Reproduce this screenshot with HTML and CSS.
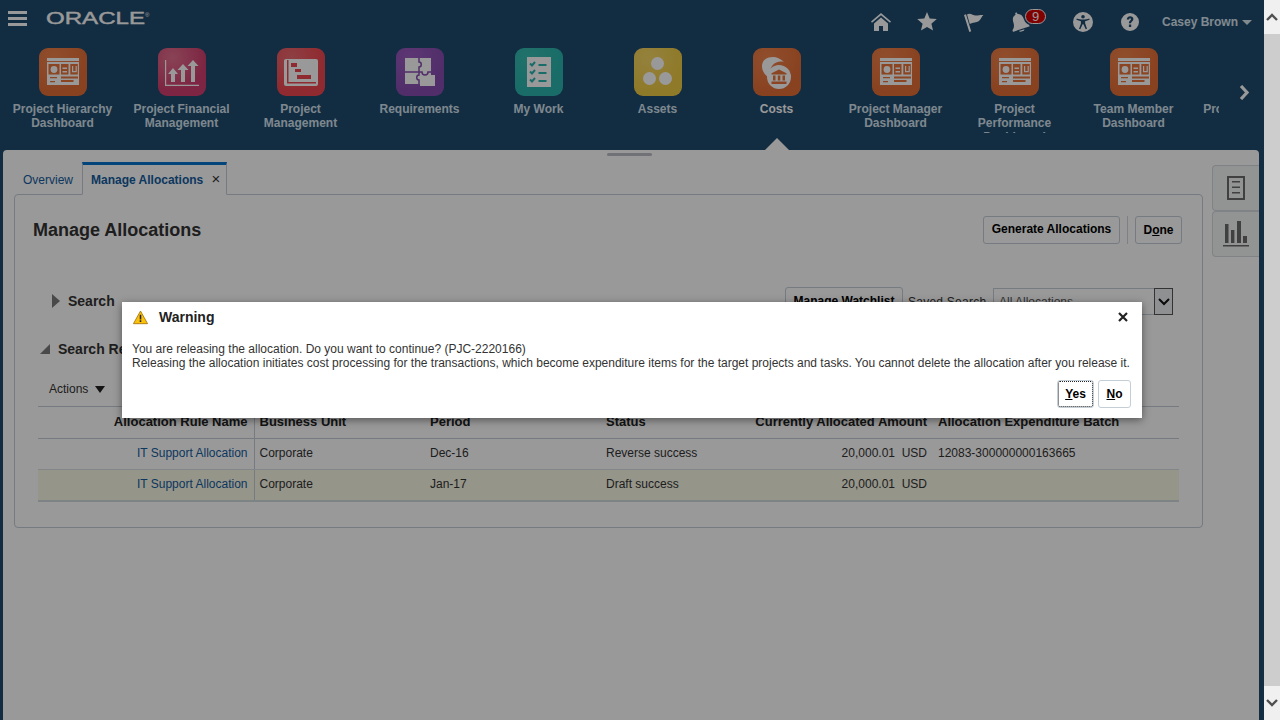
FILE: index.html
```html
<!DOCTYPE html>
<html lang="en">
<head>
  <meta charset="UTF-8" />
  <title>Manage Allocations</title>
  <link rel="stylesheet" href="styles.css">
</head>
<body>
  <svg class="defs" width="0" height="0">
    <symbol id="dash" viewBox="0 0 48 48">
      <rect x="8" y="10" width="32" height="3" fill="#fff"/>
      <rect x="8" y="14" width="32" height="23" fill="#fff"/>
      <rect x="9.5" y="16" width="11" height="10.5" fill="#e8743b"/>
      <rect x="22" y="16" width="7.5" height="10.5" fill="#e8743b"/>
      <rect x="31.3" y="16" width="7.5" height="10.5" fill="#e8743b"/>
      <circle cx="15" cy="21.5" r="3.4" fill="#fff"/>
      <path d="M23.5 19.5h4.5v1.4h-4.5zM23.5 23h4.5v1.4h-4.5zM33 18h1.2v5h2.4v-5h1.2v6.2H33z" fill="#fff"/>
      <path d="M11 29h7v1.3h-7zM11 33h5v1.3h-5zM22 28.5h17v2h-17zM22 32h12.5v2H22z" fill="#e8743b"/>
    </symbol>
  </svg>

  <div class="page">
    <header class="shell-head">
      <div class="topbar">
        <div class="hamburger"><span></span><span></span><span></span></div>
        <svg class="logo" width="104" height="16" viewBox="0 0 104 16">
          <text x="0" y="13" textLength="99" lengthAdjust="spacingAndGlyphs">ORACLE</text>
          <text x="99" y="6" class="reg">®</text>
        </svg>
        <div class="top-tools">
          <svg class="tool t-home" width="20" height="18" viewBox="0 0 20 18"><path d="M10 0 0 8.500l1 1.300L10 2.300l9 7.500 1-1.300zM3 10.500 10 4.600l7 5.900V18h-5v-5H8v5H3z"/></svg>
          <svg class="tool t-star" width="20" height="19" viewBox="0 0 20 19"><path d="m10 0 2.700 6.500 7.100.6-5.400 4.600 1.700 6.900L10 15l-6.100 3.600 1.700-6.900L.2 7.100l7.100-.6z"/></svg>
          <svg class="tool t-flag" width="20" height="19" viewBox="0 0 20 19"><path d="M0 2 2 1.300l5.200 17-1.900.7zM3 1.500C6.500-.5 9 2.800 12 2.600c2.700-.2 5-1 7.500-.6-2 1.700-2.500 4-4.500 6-2.500 2-6 1.200-9.200 3z"/></svg>
          <div class="t-bell">
            <svg class="tool bell-glyph" width="18" height="20" viewBox="0 0 18 20"><path d="M8 0h2v2c3.500.7 4.500 3.500 4.500 7 0 3 1 5 3.500 7v1.500H0V16c2.500-2 3.500-4 3.500-7 0-3.500 1-6.300 4.500-7zM6 18.500h6c-.5 1-1.500 1.500-3 1.500s-2.500-.5-3-1.500z"/></svg>
            <span class="badge">9</span>
          </div>
          <svg class="tool t-access" width="20" height="20" viewBox="0 0 20 20"><path fill-rule="evenodd" d="M10 0a10 10 0 1 1 0 20 10 10 0 0 1 0-20zm0 3a1.800 1.800 0 1 0 0 3.600A1.800 1.800 0 0 0 10 3zM3.800 6.500l-.4 1.300 4.500 1.500v2.500L6 16.700l1.300.5 2.300-5h.8l2.300 5 1.300-.5-1.900-5.400V9.300l4.500-1.500-.4-1.300c-2 .6-3.800 1.100-6.200 1.100S5.800 7.100 3.800 6.500z"/></svg>
          <svg class="tool t-help" width="18" height="18" viewBox="0 0 18 18"><path fill-rule="evenodd" d="M9 0a9 9 0 1 1 0 18A9 9 0 0 1 9 0zM5.800 6.600h2.300c.1-.9.500-1.300 1-1.300s.9.400.9.900c0 1.200-2.200 1.500-2.200 4.100h2.200c0-1.800 2.400-2 2.400-4.300C12.400 4.300 11 3.300 9.100 3.300c-2 0-3.200 1.300-3.300 3.300zM7.900 11.500v2.400h2.300v-2.400z"/></svg>
          <span class="user">Casey Brown</span>
          <span class="user-caret"></span>
        </div>
      </div>

      <nav class="strip">
        <div class="strip-items">
          <a class="app">
            <span class="tile tile-orange"><svg width="48" height="48"><use href="#dash"/></svg></span>
            <span class="app-label">Project Hierarchy Dashboard</span>
          </a>
          <a class="app">
            <span class="tile tile-pink">
              <svg width="48" height="48" viewBox="0 0 48 48"><path d="M7 12h1.200v24.800H41V38H7z" fill="#fff"/><path d="M15 20l5 6h-3v8h-4v-8h-3zM25 16l5.500 6H27v12h-4V22h-3.500zM35 12l5.500 6H37v16h-4V18h-3.500z" fill="#fff"/></svg>
            </span>
            <span class="app-label">Project Financial Management</span>
          </a>
          <a class="app">
            <span class="tile tile-red">
              <svg width="48" height="48" viewBox="0 0 48 48"><rect x="7" y="11" width="34" height="27" rx="2" fill="#fff"/><path d="M10 12h1.500v22H39v1.500H10z" fill="#ef4650"/><path d="M14 15h6v4h-6zM18 21h6v3h-6zM20 27h14v4H20z" fill="#ef4650"/></svg>
            </span>
            <span class="app-label">Project Management</span>
          </a>
          <a class="app">
            <span class="tile tile-purple">
              <svg width="48" height="48" viewBox="0 0 48 48">
                <path d="M9 10h26v17h4v11H24v-2H9z" fill="#fff"/>
                <path d="M23 10v4c3 0 3 5 0 5v5H9M23 24v3c-3 0-3 5 0 5v4M23 24h3c0 4 6 4 6 0h3" fill="none" stroke="#884db0" stroke-width="1.500"/>
              </svg>
            </span>
            <span class="app-label">Requirements</span>
          </a>
          <a class="app">
            <span class="tile tile-teal">
              <svg width="48" height="48" viewBox="0 0 48 48"><rect x="12" y="9" width="24" height="30" fill="#fff"/><path d="M15 15.500l2 2 3-3.500M15 23.500l2 2 3-3.500M15 31.500l2 2 3-3.500M23.500 17h8M23.500 25h8M23.500 33h8" fill="none" stroke="#2ab5ac" stroke-width="2"/></svg>
            </span>
            <span class="app-label">My Work</span>
          </a>
          <a class="app">
            <span class="tile tile-yellow">
              <svg width="48" height="48" viewBox="0 0 48 48"><circle cx="23.500" cy="15.500" r="6.500" fill="#fff"/><circle cx="15.500" cy="30.500" r="6.500" fill="#fff"/><circle cx="31.500" cy="30.500" r="6.500" fill="#fff"/></svg>
            </span>
            <span class="app-label">Assets</span>
          </a>
          <a class="app app-current">
            <span class="tile tile-orange">
              <svg width="48" height="48" viewBox="0 0 48 48"><path d="M16 30c-2-2-7-5-7-12C9 12 14 9 20 9c4 0 7 1.500 11 5-7-2-15 2-15 16z" fill="#fff"/><circle cx="26" cy="29" r="12" fill="#fff"/><path d="M26 21.500l7.500 3.800v1.200h-15v-1.200zM20 27.500h2.500v5H20zM24.800 27.500h2.500v5h-2.500zM29.500 27.500H32v5h-2.500zM18.500 33.500h15V36h-15z" fill="#e8743b"/></svg>
            </span>
            <span class="app-label">Costs</span>
          </a>
          <a class="app">
            <span class="tile tile-orange"><svg width="48" height="48"><use href="#dash"/></svg></span>
            <span class="app-label">Project Manager Dashboard</span>
          </a>
          <a class="app">
            <span class="tile tile-orange"><svg width="48" height="48"><use href="#dash"/></svg></span>
            <span class="app-label">Project Performance Dashboard</span>
          </a>
          <a class="app">
            <span class="tile tile-orange"><svg width="48" height="48"><use href="#dash"/></svg></span>
            <span class="app-label">Team Member Dashboard</span>
          </a>
          <a class="app">
            <span class="tile tile-orange"><svg width="48" height="48"><use href="#dash"/></svg></span>
            <span class="app-label">Project Resource Dashboard</span>
          </a>
        </div>
        <svg class="strip-next" width="12" height="15" viewBox="0 0 12 15"><path d="M2 1l6 6.500L2 14" fill="none" stroke="#fff" stroke-width="3.200"/></svg>
      </nav>
    </header>

    <main class="panel">
      <div class="grabber"></div>
      <div class="panel-body">
        <div class="work">
          <div class="tabs">
            <a class="tab">Overview</a>
            <a class="tab tab-active">Manage Allocations <span class="tab-x">×</span></a>
          </div>

          <section class="card">
            <div class="title-row">
              <h1>Manage Allocations</h1>
              <div class="title-actions">
                <button class="btn btn-gen">Generate Allocations</button>
                <span class="sep"></span>
                <button class="btn btn-done">D<u>o</u>ne</button>
              </div>
            </div>

            <div class="search-row">
              <span class="arrow-right"></span>
              <h2>Search</h2>
              <div class="search-tools">
                <button class="btn btn-watch">Manage Watchlist</button>
                <span class="saved-label">Saved Search</span>
                <div class="select">
                  <span>All Allocations</span>
                  <span class="select-btn">
                    <svg width="12" height="8" viewBox="0 0 12 8"><path d="M1 1l5 5 5-5" fill="none" stroke="#111" stroke-width="2"/></svg>
                  </span>
                </div>
              </div>
            </div>

            <div class="results-row">
              <span class="arrow-down"></span>
              <h2>Search Results</h2>
            </div>

            <div class="actions-row">Actions <span class="actions-caret"></span></div>

            <table class="grid">
              <colgroup>
                <col class="c1"><col class="c2"><col class="c3"><col class="c4"><col class="c5"><col class="c6"><col>
              </colgroup>
              <thead>
                <tr>
                  <th class="num first">Allocation Rule Name</th>
                  <th>Business Unit</th>
                  <th>Period</th>
                  <th>Status</th>
                  <th class="num amt">Currently Allocated Amount</th>
                  <th>Allocation Expenditure Batch</th>
                  <th></th>
                </tr>
              </thead>
              <tbody>
                <tr>
                  <td class="num first"><a>IT Support Allocation</a></td>
                  <td>Corporate</td>
                  <td>Dec-16</td>
                  <td>Reverse success</td>
                  <td class="num amt">20,000.01&nbsp; USD</td>
                  <td>12083-300000000163665</td>
                  <td></td>
                </tr>
                <tr class="row-selected">
                  <td class="num first"><a>IT Support Allocation</a></td>
                  <td>Corporate</td>
                  <td>Jan-17</td>
                  <td>Draft success</td>
                  <td class="num amt">20,000.01&nbsp; USD</td>
                  <td></td>
                  <td></td>
                </tr>
              </tbody>
            </table>
          </section>
        </div>

        <aside class="side-tabs">
          <div class="side-tab">
            <svg width="18" height="24" viewBox="0 0 18 24"><path fill-rule="evenodd" d="M0 0h18v24H0zm2 2v20h14V2zM5 5h8v1.600H5zM5 10.500h8v1.600H5zM5 16h8v1.600H5z"/></svg>
          </div>
          <div class="side-tab">
            <svg width="26" height="26" viewBox="0 0 26 26"><path d="M2 3h3.500v19H2zM8 9h3.400v13H8zM14 0h4v22h-4zM20 15h4v7h-4zM0 24h26v1.600H0z"/></svg>
          </div>
        </aside>
      </div>
    </main>

    <div class="glass"></div>

    <div class="dialog">
      <div class="dialog-head">
        <svg class="warn" width="15" height="15" viewBox="0 0 17 16"><path d="M8.500.7 16.500 15H.5z" fill="#fcc20a" stroke="#a8750c" stroke-width="1" stroke-linejoin="round"/><path d="M7.600 5h1.800v5.200H7.600zM7.600 11h1.800v2H7.600z" fill="#222"/></svg>
        <strong>Warning</strong>
        <svg class="dialog-close" width="10" height="10" viewBox="0 0 10 10"><path d="M1 1l8 8M9 1l-8 8" stroke="#222" stroke-width="2.200"/></svg>
      </div>
      <p>You are releasing the allocation. Do you want to continue? (PJC-2220166)<br>Releasing the allocation initiates cost processing for the transactions, which become expenditure items for the target projects and tasks. You cannot delete the allocation after you release it.</p>
      <div class="dialog-actions">
        <button class="btn btn-yes"><u>Y</u>es</button>
        <button class="btn btn-no"><u>N</u>o</button>
      </div>
    </div>
  </div>

  <div class="scrollbar">
    <div class="scroll-btn">
      <svg width="12" height="8" viewBox="0 0 12 8"><path d="M1 7l5-5 5 5" fill="none" stroke="#505050" stroke-width="2.400"/></svg>
    </div>
    <div class="scroll-thumb"></div>
    <div class="scroll-btn">
      <svg width="12" height="8" viewBox="0 0 12 8"><path d="M1 1l5 5 5-5" fill="none" stroke="#505050" stroke-width="2.400"/></svg>
    </div>
  </div>
</body>
</html>
```

FILE: styles.css
```css
* {
  box-sizing: border-box;
}

html, body {
  margin: 0;
  height: 720px;
  overflow: hidden;
}

body {
  display: flex;
  font-family: "Liberation Sans", Arial, sans-serif;
  font-size: 12px;
  color: #333;
}

.defs {
  position: absolute;
}

.page {
  position: relative;
  width: 1264px;
  height: 720px;
  display: flex;
  flex-direction: column;
  background-color: #1e4a6e;
}

/* header */
.shell-head {
  height: 150px;
  flex: none;
}

.topbar {
  height: 44px;
  display: flex;
  align-items: flex-start;
  padding: 11px 0 0 8px;
}

.hamburger {
  width: 19px;
  height: 15px;
  display: flex;
  flex-direction: column;
  justify-content: space-between;
}

.hamburger span {
  height: 3px;
  background-color: #fff;
}

.logo {
  margin-left: 19px;
}

.logo text {
  font-size: 17px;
  fill: #fff;
  stroke: #fff;
  stroke-width: 0.4px;
}

.logo .reg {
  font-size: 6px;
  stroke-width: 0;
}

.top-tools {
  margin-left: auto;
  height: 22px;
  display: flex;
  align-items: center;
  position: relative;
  width: 404px;
}

.tool {
  position: absolute;
  fill: #fff;
}

.t-home { left: 11px; top: 2px; }
.t-star { left: 57px; top: 1px; }
.t-flag { left: 104px; top: 2px; }
.t-bell { position: absolute; left: 150px; top: 1px; }
.t-access { left: 213px; top: 1px; }
.t-help { left: 261px; top: 2px; }

.bell-glyph {
  transform: rotate(-18deg);
}

.badge {
  position: absolute;
  left: 15px;
  top: -3px;
  width: 21px;
  height: 15px;
  border-radius: 8px;
  background-color: #d80000;
  border: 1px solid #fff;
  color: #fff;
  font-size: 13px;
  line-height: 13px;
  text-align: center;
}

.user {
  position: absolute;
  left: 302px;
  color: #d9e5ee;
  font-weight: bold;
}

.user-caret {
  position: absolute;
  left: 382px;
  top: 9px;
  border: 5px solid transparent;
  border-top-color: #d9e5ee;
  border-bottom: 0;
}

.strip {
  display: flex;
  height: 106px;
  padding: 4px 0 0 3px;
}

.strip-items {
  width: 1216px;
  display: flex;
  overflow: hidden;
}

.app {
  flex: 0 0 119px;
  display: flex;
  flex-direction: column;
  align-items: center;
}

.tile {
  width: 48px;
  height: 48px;
  border-radius: 9px;
  display: block;
  flex: none;
}

.tile svg {
  display: block;
}

.tile-orange { background: radial-gradient(circle at 30% 20%, #f0824a, #e46e36 70%); }
.tile-pink { background: radial-gradient(circle at 30% 20%, #e4708f, #d13f6f 65%); }
.tile-red { background: radial-gradient(circle at 30% 20%, #ec6a70, #ef4650 65%); }
.tile-purple { background: radial-gradient(circle at 30% 20%, #9a5cc0, #884db0 65%); }
.tile-teal { background: radial-gradient(circle at 30% 20%, #37bdb2, #2ab5ac 65%); }
.tile-yellow { background: radial-gradient(circle at 30% 20%, #f7d765, #efcc46 65%); }

.app-label {
  margin-top: 6px;
  height: 31px;
  overflow: hidden;
  width: 108px;
  flex: none;
  color: #d4e2ed;
  font-weight: bold;
  font-size: 12px;
  line-height: 14px;
  text-align: center;
}

.app-current .app-label {
  color: #fff;
}

.strip-next {
  margin: 37px 0 0 20px;
}

/* main panel */
.panel {
  flex: 1;
  position: relative;
  margin: 0 5px 0 3px;
  background-color: #fff;
  border-radius: 4px 4px 0 0;
}

/* costs pointer sits over the panel edge */
.panel::before {
  content: "";
  position: absolute;
  left: 762px;
  top: -12px;
  border: 12px solid transparent;
  border-bottom-color: #fff;
  border-top: 0;
}

.grabber {
  position: absolute;
  left: 604px;
  top: 3px;
  width: 45px;
  height: 3px;
  border-radius: 2px;
  background-color: #bcbcc8;
}

.panel-body {
  display: flex;
  padding-top: 12px;
}

.work {
  width: 1200px;
  padding-left: 11px;
}

.tabs {
  display: flex;
  height: 33px;
  position: relative;
  z-index: 1;
}

.tab {
  width: 68px;
  padding: 11px 0 0 9px;
  color: #145c9e;
  line-height: 14px;
}

.tab-active {
  width: 145px;
  padding-left: 8px;
  padding-top: 7px;
  border: 1px solid #c4ced7;
  border-top: 3px solid #0572ce;
  border-bottom: 1px solid #fff;
  background-color: #fff;
  font-weight: bold;
}

.tab-x {
  margin-left: 5px;
  color: #333;
  font-weight: normal;
  font-size: 15px;
  line-height: 14px;
}

.card {
  width: 1189px;
  height: 334px;
  margin-top: -1px;
  padding: 21px 23px 0;
  border: 1px solid #c4ced7;
  border-radius: 4px;
}

h1 {
  margin: 0;
  font-size: 18px;
  line-height: 28px;
  color: #333;
}

h2 {
  margin: 0;
  font-size: 14px;
  color: #333;
}

.title-row {
  display: flex;
  align-items: center;
  margin-left: -5px;
  margin-right: -3px;
  height: 28px;
}

.title-actions {
  margin-left: auto;
  display: flex;
  align-items: center;
  gap: 7px;
}

.sep {
  width: 1px;
  height: 28px;
  background-color: #d3d8dd;
}

.btn {
  height: 28px;
  padding: 0;
  border: 1px solid #c4ced7;
  border-radius: 3px;
  background-color: #fff;
  font-family: inherit;
  font-size: 12px;
  font-weight: bold;
  color: #000;
  white-space: nowrap;
}

.btn-gen {
  width: 137px;
  padding-bottom: 3px;
}

.btn-done {
  width: 47px;
}

.search-row {
  display: flex;
  align-items: center;
  height: 27px;
  margin-top: 44px;
  padding-left: 14px;
}

.arrow-right {
  margin-bottom: 1px;
  border: 7px solid transparent;
  border-left: 8px solid #7a7a7a;
  border-right: 0;
}

.search-row h2 {
  margin: 0 0 2px 8px;
}

.search-tools {
  margin-left: auto;
  margin-right: 6px;
  display: flex;
  align-items: center;
}

.btn-watch {
  width: 118px;
  margin-bottom: 1px;
}

.saved-label {
  margin-left: 5px;
  width: 85px;
  letter-spacing: 0.25px;
}

.select {
  width: 180px;
  height: 27px;
  display: flex;
  align-items: center;
  justify-content: space-between;
  padding-left: 5px;
  border: 1px solid #c4ced7;
  border-right: 0;
  color: #555;
}

.select-btn {
  width: 19px;
  height: 27px;
  display: flex;
  align-items: center;
  justify-content: center;
  border: 1px solid #555;
  background-color: #eef1f4;
}

.results-row {
  display: flex;
  align-items: center;
  height: 14px;
  margin-top: 27px;
  padding-left: 2px;
}

.arrow-down {
  width: 0;
  height: 0;
  border-left: 10px solid transparent;
  border-bottom: 10px solid #7a7a7a;
}

.results-row h2 {
  margin-left: 8px;
}

.actions-row {
  height: 18px;
  margin-top: 24px;
  padding-left: 11px;
  line-height: 18px;
}

.actions-caret {
  display: inline-block;
  margin-left: 3px;
  border: 5px solid transparent;
  border-top: 7px solid #222;
  border-bottom: 0;
}

/* table */
.grid {
  width: 1141px;
  margin-top: 8px;
  border-collapse: collapse;
  table-layout: fixed;
  border-top: 1px solid #c4ced7;
}

.c1 { width: 216px; }
.c2 { width: 171px; }
.c3 { width: 176px; }
.c4 { width: 135px; }
.c5 { width: 197px; }
.c6 { width: 230px; }

.grid th {
  height: 32px;
  padding: 0 5px 2px;
  border-bottom: 1px solid #c4ced7;
  font-size: 13px;
  color: #222;
  text-align: left;
  white-space: nowrap;
}

.grid td {
  height: 31px;
  padding: 0 5px 2px;
  border-bottom: 1px solid #d9dfe3;
  color: #333;
  white-space: nowrap;
}

.grid .num {
  text-align: right;
}

.grid .first,
.grid .amt {
  padding-right: 6px;
}

.grid .first {
  border-right: 1px solid #c4ced7;
}

.grid a {
  color: #145c9e;
}

.row-selected td {
  background-color: #f8f8e6;
  border-bottom: 2px solid #d3dae0;
}

/* side tabs */
.side-tabs {
  margin-left: 9px;
  padding-top: 3px;
  width: 47px;
}

.side-tab {
  height: 46px;
  display: flex;
  align-items: center;
  justify-content: center;
  border: 1px solid #d6dade;
  border-right: 0;
  border-radius: 4px 0 0 4px;
  background-color: #f4f5f6;
  fill: #6b6b6b;
}

/* modal */
.glass {
  position: absolute;
  inset: 0;
  z-index: 5;
  background-color: rgba(0, 0, 0, 0.4);
}

.dialog {
  position: absolute;
  z-index: 6;
  left: 122px;
  top: 302px;
  width: 1020px;
  height: 116px;
  padding: 7px 11px 0 10px;
  background-color: #fff;
  box-shadow: 0 2px 8px rgba(0, 0, 0, 0.45);
}

.dialog-head {
  display: flex;
  align-items: center;
  height: 16px;
}

.warn {
  margin-left: 1px;
}

.dialog-head strong {
  margin-left: 11px;
  font-size: 14px;
  color: #222;
}

.dialog-close {
  margin-left: auto;
  margin-right: 3px;
}

.dialog p {
  margin: 17px 0 0;
  line-height: 14px;
  white-space: nowrap;
  color: #333;
}

.dialog-actions {
  display: flex;
  justify-content: flex-end;
  gap: 4px;
  margin-top: 10px;
}

.btn-yes {
  width: 37px;
  outline: 1px dotted #222;
  outline-offset: -2px;
}

.btn-no {
  width: 33px;
}

/* page scrollbar */
.scrollbar {
  width: 16px;
  height: 720px;
  display: flex;
  flex-direction: column;
  background-color: #f0f0f0;
}

.scroll-btn {
  height: 34px;
  display: flex;
  align-items: center;
  justify-content: center;
}

.scroll-thumb {
  flex: 1;
  background-color: #cdcdcd;
}
```
